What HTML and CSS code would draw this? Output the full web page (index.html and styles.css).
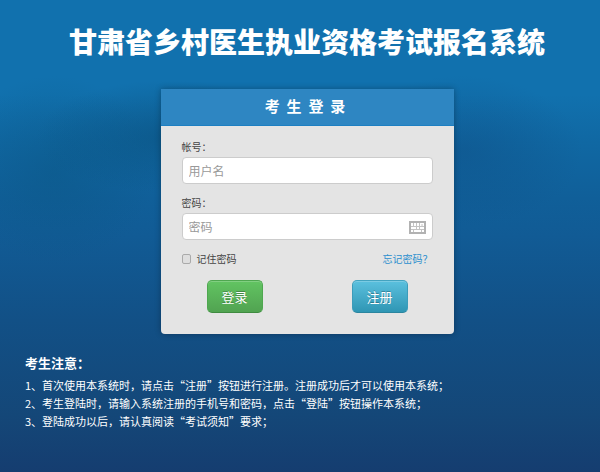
FILE: index.html
```html
<!DOCTYPE html>
<html lang="zh-CN">
<head>
    <meta charset="UTF-8">
    <meta name="viewport" content="width=device-width, initial-scale=1.0">
    <title>甘肃省乡村医生执业资格考试报名系统</title>
    <link rel="stylesheet" href="styles.css">
</head>
<body>

<header class="page-header">
    <h1>甘肃省乡村医生执业资格考试报名系统</h1>
</header>

<main class="login-area">
    <div class="login-box">
        <h2 class="login-title">考&nbsp; 生&nbsp; 登&nbsp; 录</h2>
        <form class="login-form" onsubmit="return false;">
            <div class="field">
                <label for="username">帐号：</label>
                <input type="text" id="username" class="text-input" placeholder="用户名">
            </div>
            <div class="field">
                <label for="password">密码：</label>
                <div class="password-wrap">
                    <input type="password" id="password" class="text-input" placeholder="密码">
                    <!-- soft keyboard icon -->
                    <svg class="keyboard-icon" width="17" height="13" viewBox="0 0 17 13" aria-hidden="true">
                        <rect width="17" height="13" fill="#b2b2b2"/>
                        <rect x="2" y="2" width="13" height="9" fill="#fff"/>
                        <path d="M2 5.5h13M2 8.5h13M4.5 2v3.5M7.5 2v6M10.5 2v6M13 3v3M4.5 8.5V11M12.5 8.5V11" stroke="#c4c4c4" fill="none"/>
                    </svg>
                </div>
            </div>
            <div class="options">
                <label class="remember" for="remember"><input type="checkbox" id="remember">记住密码</label>
                <a href="#" class="forgot">忘记密码？</a>
            </div>
            <div class="buttons">
                <button type="submit" class="btn btn-login">登录</button>
                <button type="button" class="btn btn-register">注册</button>
            </div>
        </form>
    </div>
</main>

<section class="notice">
    <h3>考生注意：</h3>
    <p>1、首次使用本系统时，请点击“注册”按钮进行注册。注册成功后才可以使用本系统；</p>
    <p>2、考生登陆时，请输入系统注册的手机号和密码，点击“登陆”按钮操作本系统；</p>
    <p>3、登陆成功以后，请认真阅读“考试须知”要求；</p>
</section>

</body>
</html>
```
FILE: styles.css
```css
* {
    box-sizing: border-box;
}

html {
    min-height: 100%;
    background:
        radial-gradient(ellipse 22% 12% at 28% 29%, rgba(10, 80, 125, 0.6), rgba(10, 80, 125, 0)),
        radial-gradient(ellipse 17% 20% at 9% 36%, rgba(10, 85, 130, 0.45), rgba(10, 85, 130, 0)),
        radial-gradient(ellipse 20% 16% at 77% 32%, rgba(15, 80, 135, 0.5), rgba(15, 80, 135, 0)),
        linear-gradient(#1171ae 0%, #1171ae 20%, #1068a3 30%, #105f99 42%, #115b95 50%, #125086 68%, #144778 88%, #153d70 100%);
}

body {
    margin: 0;
    font-family: "Noto Sans CJK SC", sans-serif;
    font-size: 11px;
    color: #444;
}

h1, h2, h3, p {
    margin: 0;
}

.page-header {
    padding: 20px 0 27px 14px;
    text-align: center;
    color: #fff;
}

.page-header h1 {
    font-size: 28px;
    font-weight: 900;
    line-height: 42px;
}

.login-area {
    padding-left: 14px;
}

.login-box {
    width: 100%;
    max-width: 293px;
    margin: 0 auto;
    background-color: #e4e4e4;
    border-radius: 0 0 4px 4px;
    box-shadow: 0 0 6px rgba(0, 0, 0, 0.3);
}

.login-title {
    padding: 5px 4px 7px 0;
    border-bottom: 1px solid #1c7fc2;
    background-color: #2e86c2;
    color: #fff;
    font-size: 15px;
    line-height: 24px;
    text-align: center;
}

.login-form {
    padding: 12px 21px 21px;
    font-size: 10px;
}

.field {
    margin-bottom: 10px;
}

.field label {
    display: block;
    padding-bottom: 1px;
    line-height: 18px;
}

.text-input {
    display: block;
    width: 100%;
    height: 27px;
    padding: 0 6px;
    border: 1px solid #ccc;
    border-radius: 4px;
    background-color: #fff;
    font-family: inherit;
    font-size: 12px;
    color: #555;
}

.text-input::placeholder {
    color: #999;
}

.password-wrap {
    position: relative;
}

.keyboard-icon {
    position: absolute;
    top: 8px;
    right: 7px;
}

.options {
    display: flex;
    justify-content: space-between;
    line-height: 18px;
}

.remember {
    display: flex;
    align-items: center;
    gap: 6px;
}

.remember input {
    appearance: none;
    width: 9px;
    height: 10px;
    margin: 0;
    border: 1px solid #aaa;
    border-radius: 2px;
    background-color: #dedede;
}

.remember input:checked {
    background-color: #2e86c2;
}

.forgot {
    color: #2b8fce;
    text-decoration: none;
}

.buttons {
    display: flex;
    justify-content: space-between;
    padding: 12px 25px 0;
}

.btn {
    width: 56px;
    height: 33px;
    padding: 0;
    border: 1px solid;
    border-radius: 5px;
    box-shadow: inset 0 1px 0 rgba(255, 255, 255, 0.2);
    color: #fff;
    font-family: inherit;
    font-size: 13px;
    text-shadow: 0 -1px 0 rgba(0, 0, 0, 0.25);
}

.btn-login {
    border-color: #4fa750 #4fa750 #3f8b40;
    background: linear-gradient(#62c462, #51a351);
}

.btn-register {
    border-color: #43a3c0 #3c9cba #2b859f;
    background: linear-gradient(#5bc0de, #2f96b4);
}

.notice {
    padding: 20px 25px;
    color: #fff;
    line-height: 18px;
}

.notice h3 {
    margin-bottom: 4px;
    font-size: 13px;
    line-height: 18px;
}
```
